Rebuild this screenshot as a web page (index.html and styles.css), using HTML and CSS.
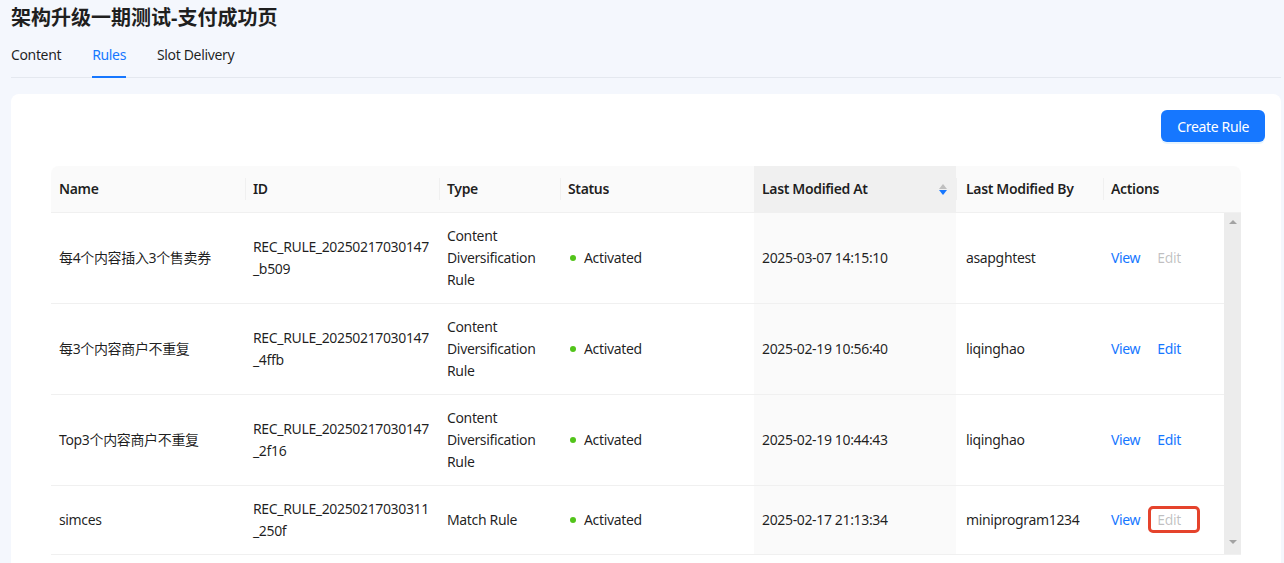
FILE: index.html
```html
<!DOCTYPE html>
<html lang="zh-CN">
<head>
    <meta charset="UTF-8">
    <meta name="viewport" content="width=device-width, initial-scale=1.0">
    <title>架构升级一期测试-支付成功页</title>
    <link rel="stylesheet" href="styles.css">
</head>
<body>
    <div class="page">
        <h1 class="page-title">架构升级一期测试-支付成功页</h1>

        <nav class="tabs">
            <a class="tab">Content</a>
            <a class="tab active">Rules</a>
            <a class="tab">Slot Delivery</a>
        </nav>

        <div class="card">
            <div class="toolbar">
                <button class="btn-primary">Create Rule</button>
            </div>

            <div class="table-wrap">
                <table class="rules">
                    <colgroup>
                        <col style="width: 194px">
                        <col style="width: 194px">
                        <col style="width: 121px">
                        <col style="width: 194px">
                        <col style="width: 202px">
                        <col style="width: 147px">
                        <col style="width: 121px">
                        <col style="width: 17px">
                    </colgroup>
                    <thead>
                        <tr>
                            <th>Name</th>
                            <th>ID</th>
                            <th>Type</th>
                            <th>Status</th>
                            <th class="sorted">
                                <div class="sort-head">
                                    <span>Last Modified At</span>
                                    <span class="sorter">
                                        <span class="caret up"></span>
                                        <span class="caret down on"></span>
                                    </span>
                                </div>
                            </th>
                            <th class="by">Last Modified By</th>
                            <th>Actions</th>
                            <th class="gutter"></th>
                        </tr>
                    </thead>
                    <tbody>
                        <tr>
                            <td>每4个内容插入3个售卖券</td>
                            <td class="wrap">REC_RULE_20250217030147_b509</td>
                            <td>Content Diversification Rule</td>
                            <td><span class="dot"></span>Activated</td>
                            <td class="sorted">2025-03-07 14:15:10</td>
                            <td class="by">asapghtest</td>
                            <td><a class="act">View</a><a class="act disabled">Edit</a></td>
                            <td class="scrollbar" rowspan="4">
                                <div class="sb-inner">
                                    <span class="sb-arrow up"></span>
                                    <span class="sb-arrow down"></span>
                                </div>
                            </td>
                        </tr>
                        <tr>
                            <td>每3个内容商户不重复</td>
                            <td class="wrap">REC_RULE_20250217030147_4ffb</td>
                            <td>Content Diversification Rule</td>
                            <td><span class="dot"></span>Activated</td>
                            <td class="sorted">2025-02-19 10:56:40</td>
                            <td class="by">liqinghao</td>
                            <td><a class="act">View</a><a class="act">Edit</a></td>
                        </tr>
                        <tr>
                            <td>Top3个内容商户不重复</td>
                            <td class="wrap">REC_RULE_20250217030147_2f16</td>
                            <td>Content Diversification Rule</td>
                            <td><span class="dot"></span>Activated</td>
                            <td class="sorted">2025-02-19 10:44:43</td>
                            <td class="by">liqinghao</td>
                            <td><a class="act">View</a><a class="act">Edit</a></td>
                        </tr>
                        <tr>
                            <td>simces</td>
                            <td class="wrap">REC_RULE_20250217030311_250f</td>
                            <td>Match Rule</td>
                            <td><span class="dot"></span>Activated</td>
                            <td class="sorted">2025-02-17 21:13:34</td>
                            <td class="by">miniprogram1234</td>
                            <td><a class="act">View</a><a class="act disabled marked">Edit</a></td>
                        </tr>
                    </tbody>
                </table>
            </div>
        </div>
    </div>
</body>
</html>
```

FILE: styles.css
```css
body {
    margin: 0;
    font-family: 'Noto Sans', 'Noto Sans CJK SC', sans-serif;
    font-size: 14px;
    line-height: 22px;
    letter-spacing: -0.35px;
    color: rgba(0,0,0,0.88);
    background-color: #f4f7fd;
    overflow: hidden;
}
.page {
    padding: 0 3px 0 11px;
}
.page-title {
    margin: 0;
    padding-top: 4px;
    font-size: 20px;
    line-height: 28px;
    font-weight: 700;
    letter-spacing: 0;
    color: #1f1f1f;
}
.tabs {
    display: flex;
    gap: 31px;
    margin-top: 4px;
    border-bottom: 1px solid #e4e8ef;
}
.tab {
    padding: 8px 0 10px;
    color: rgba(0,0,0,0.88);
    border-bottom: 2px solid transparent;
    margin-bottom: -1px;
    cursor: pointer;
}
.tab.active {
    color: #1677ff;
    border-bottom-color: #1677ff;
}
.card {
    margin-top: 16px;
    background-color: white;
    border-radius: 8px;
    height: 520px;
}
.toolbar {
    display: flex;
    justify-content: flex-end;
    padding: 16px 16px 24px;
}
.btn-primary {
    background-color: #1677ff;
    color: white;
    border: none;
    height: 32px;
    padding: 0 16px;
    border-radius: 6px;
    font-family: inherit;
    font-size: 14px;
    letter-spacing: -0.35px;
    box-shadow: 0 2px 0 rgba(5,145,255,0.1);
    cursor: pointer;
}
.table-wrap {
    padding: 0 40px;
}
.rules {
    width: 1190px;
    table-layout: fixed;
    border-collapse: separate;
    border-spacing: 0;
}
.rules th {
    position: relative;
    text-align: left;
    font-weight: 600;
    background-color: #fafafa;
    padding: 12px 8px;
    border-bottom: 1px solid #f0f0f0;
}
.rules th:first-child {
    border-top-left-radius: 8px;
}
.rules th:last-child {
    border-top-right-radius: 8px;
}
.rules th + th:not(.gutter):not(.sorted)::before {
    content: "";
    position: absolute;
    left: 0;
    top: 50%;
    width: 1px;
    height: 22px;
    transform: translateY(-50%);
    background-color: #f0f0f0;
}
.rules th.sorted {
    background-color: #f0f0f0;
}
.rules th.by,
.rules td.by {
    padding-left: 10px;
}
.rules td {
    padding: 12px 8px;
    border-bottom: 1px solid #f0f0f0;
    vertical-align: middle;
}
.rules td.sorted {
    background-color: #fafafa;
}
.rules td.wrap {
    overflow-wrap: anywhere;
}
.sort-head {
    display: flex;
    align-items: center;
    justify-content: space-between;
}
.sorter {
    display: flex;
    flex-direction: column;
    gap: 1px;
    margin-right: 1px;
}
.caret {
    width: 0;
    height: 0;
    border-left: 4px solid transparent;
    border-right: 4px solid transparent;
}
.caret.up {
    border-bottom: 5px solid #bfbfbf;
}
.caret.down {
    border-top: 5px solid #bfbfbf;
}
.caret.down.on {
    border-top-color: #1677ff;
}
.dot {
    display: inline-block;
    width: 6px;
    height: 6px;
    border-radius: 50%;
    background-color: #52c41a;
    margin: 0 8px 0 2px;
    vertical-align: middle;
    position: relative;
    top: -1px;
}
.act {
    color: #1677ff;
    cursor: pointer;
}
.act + .act {
    margin-left: 17px;
}
.act.disabled {
    color: rgba(0,0,0,0.25);
    cursor: not-allowed;
}
.act.marked {
    display: inline-block;
    border: 3px solid #e5432c;
    border-radius: 5px;
    padding: 0 16px 0 6px;
    margin: -3px -25px -3px 8px;
    line-height: 21px;
}
.rules td.scrollbar {
    padding: 0;
    background-color: #ececec;
    border-bottom: 1px solid #f0f0f0;
    vertical-align: top;
}
.sb-inner {
    box-sizing: border-box;
    display: flex;
    flex-direction: column;
    justify-content: space-between;
    align-items: center;
    height: 338px;
    padding: 7px 0;
}
.sb-arrow {
    width: 0;
    height: 0;
    border-left: 4px solid transparent;
    border-right: 4px solid transparent;
}
.sb-arrow.up {
    border-bottom: 4px solid #a3a3a3;
}
.sb-arrow.down {
    border-top: 4px solid #a3a3a3;
}
```
